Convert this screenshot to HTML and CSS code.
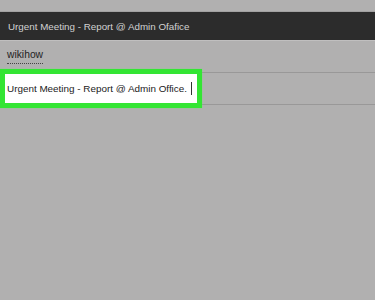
FILE: index.html
```html
<!DOCTYPE html>
<html>
<head>
<meta charset="utf-8">
<link rel="stylesheet" href="styles.css">
</head>
<body>
<div class="topstrip"></div>
<div class="titlebar">Urgent Meeting - Report @ Admin Ofafice</div>
<div class="row"><span class="word">wikihow</span></div>
<div class="row edit-row">
  <div class="editor"><span class="edit-text">Urgent Meeting - Report @ Admin Office.</span><span class="caret"></span></div>
</div>
</body>
</html>
```
FILE: styles.css
```css
html, body {
  margin: 0;
  padding: 0;
  background: #b1b0b0;
  font-family: "Liberation Sans", Arial, sans-serif;
}
body {
  width: 375px;
  height: 300px;
  overflow: hidden;
}
.topstrip {
  height: 11px;
  border-bottom: 1px solid #a2a1a1;
}
.titlebar {
  height: 28px;
  line-height: 29px;
  background: #2c2c2c;
  color: #d2d2d2;
  font-size: 9.8px;
  padding-left: 8px;
  border-bottom: 1px solid #c0bfbf;
}
.row {
  height: 31px;
  border-bottom: 1px solid #999898;
  display: flex;
  align-items: center;
  padding-left: 7px;
}
.word {
  font-size: 10.3px;
  color: #222;
  line-height: 12px;
  margin-top: -1px;
  border-bottom: 1px dotted #444;
  padding-bottom: 2px;
}
.edit-row {
  position: relative;
}
.editor {
  position: absolute;
  left: 0;
  top: -4px;
  width: 202px;
  height: 39px;
  box-sizing: border-box;
  border: 5px solid #33e533;
  background: #ffffff;
  display: flex;
  align-items: center;
  padding-left: 2px;
  box-shadow: 0 0 1px #5ef05e;
}
.edit-text {
  font-size: 9.9px;
  color: #1a1a1a;
  white-space: nowrap;
}
.caret {
  display: inline-block;
  width: 1px;
  height: 13px;
  background: #333;
  margin-left: 4px;
}
```
